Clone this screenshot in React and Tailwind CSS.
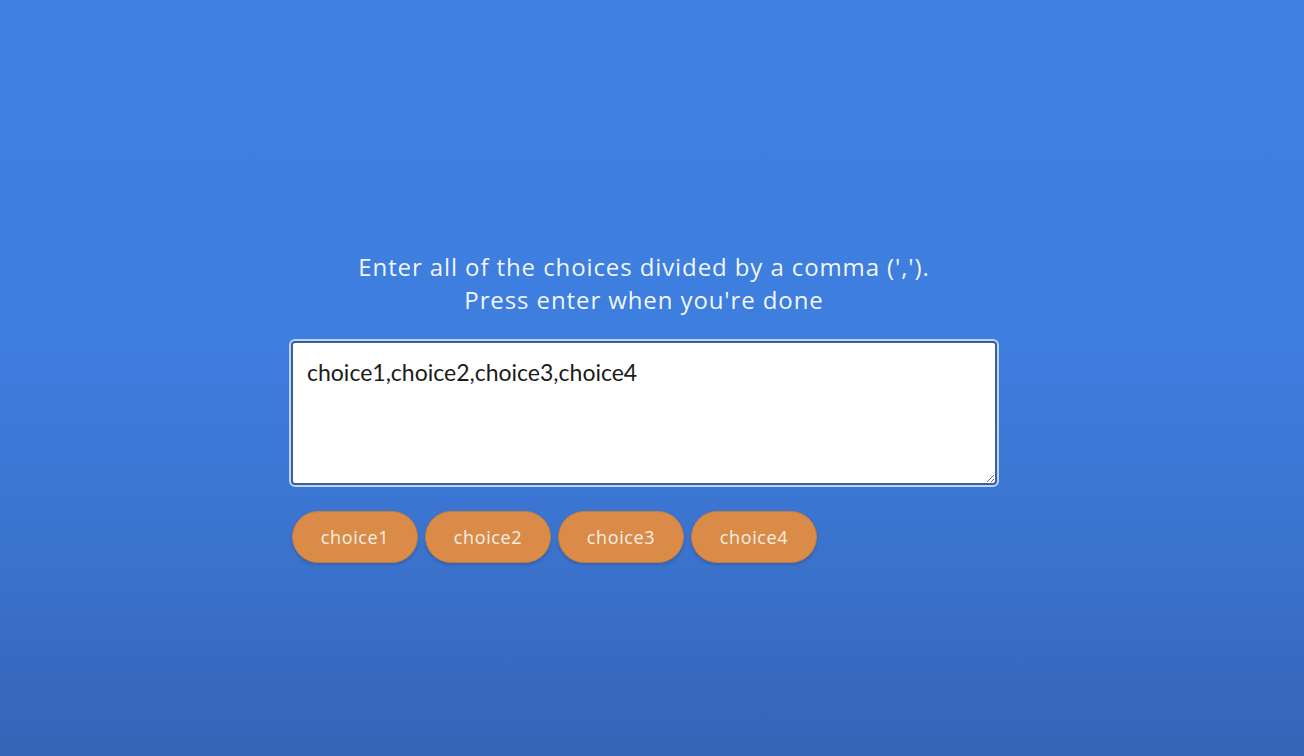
const CHOICES = 'choice1,choice2,choice3,choice4'

export default function App() {
  const items = CHOICES.split(',')

  return (
    <div className="min-h-screen h-[756px] w-full bg-[linear-gradient(to_bottom,#3f80e1_0%,#3e7edf_45%,#3a72cc_75%,#3464b6_100%)] flex justify-center pr-4 overflow-hidden">
      <div className="w-[706px] pt-[250px] flex flex-col items-center font-['Open_Sans',sans-serif]">
        <h1 className="text-center text-white/95 text-[24px] leading-[33px] font-medium tracking-[0.9px]">
          Enter all of the choices divided by a comma (',').
          <br />
          Press enter when you're done
        </h1>

        <textarea
          defaultValue={CHOICES}
          className="mt-[25px] w-[706px] h-[144px] rounded-[4px] border-2 border-[#3e5f92] bg-white px-[14px] py-[15px] text-[23px] leading-[28px] text-[#1b1b1b] outline outline-2 outline-[#b9d4f7] font-['Lato',sans-serif] resize"
        />

        <div className="mt-[26px] w-full flex gap-[7px] pl-px">
          {items.map(c => (
            <button
              key={c}
              type="button"
              className="w-[126px] h-[52px] rounded-[26px] bg-[#d98b47] border border-[#c57d3f] text-[#f7efe6] text-[18px] tracking-[0.6px] shadow-[0_2px_3px_rgba(0,0,0,0.15)]"
            >
              {c}
            </button>
          ))}
        </div>
      </div>
    </div>
  )
}
